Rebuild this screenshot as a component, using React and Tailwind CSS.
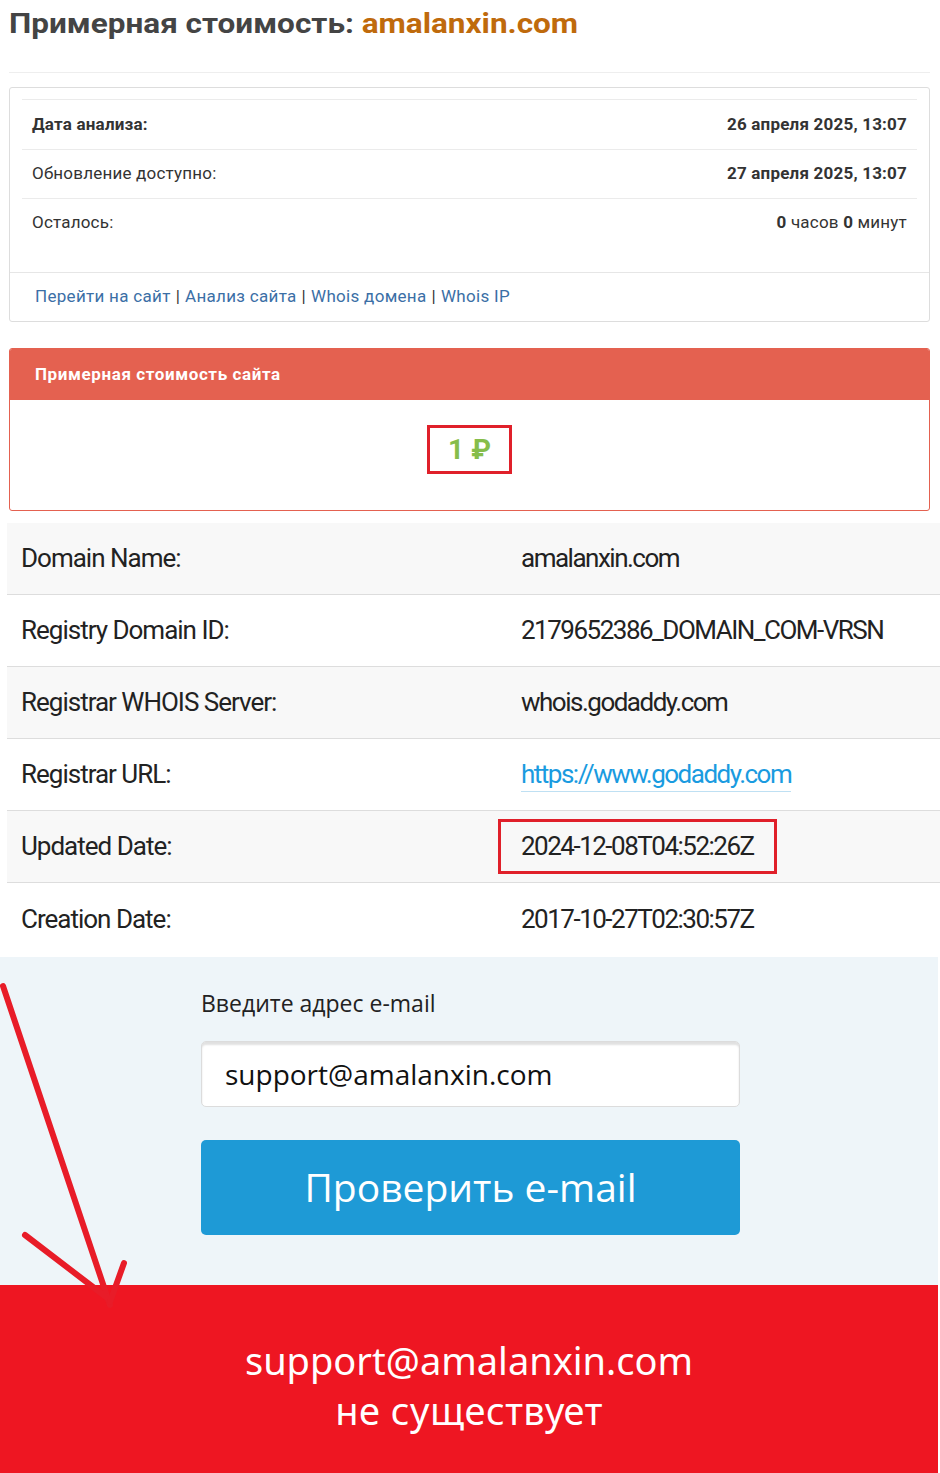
import React from "react";

const rows = [
  { k: "Domain Name:", v: "amalanxin.com", bg: true },
  { k: "Registry Domain ID:", v: "2179652386_DOMAIN_COM-VRSN" },
  { k: "Registrar WHOIS Server:", v: "whois.godaddy.com", bg: true },
  { k: "Registrar URL:", v: "https://www.godaddy.com", link: true },
  { k: "Updated Date:", v: "2024-12-08T04:52:26Z", bg: true, boxed: true },
  { k: "Creation Date:", v: "2017-10-27T02:30:57Z" },
];

export default function App() {
  return (
    <div className="relative w-[940px] bg-white" style={{ fontFamily: "Roboto, 'Liberation Sans', sans-serif" }}>
      {/* top area */}
      <div className="pl-[9px] pr-[10px]">
        <div className="h-[48px] flex items-center">
          <h1 className="text-[28px] font-bold text-[#444] leading-none whitespace-nowrap origin-left scale-x-[1.125]">
            Примерная стоимость: <span className="text-[#bf6a0c]">amalanxin.com</span>
          </h1>
        </div>
        <div className="mt-[24px] border-t border-[#eeeeee]" />

        {/* info card */}
        <div className="mt-[14px] border border-[#dddddd] rounded-[3px]">
          <div className="px-[12px] pt-[11px] pb-[25px] text-[17px] tracking-[0.2px] text-[#333]">
            <div className="h-[50px] border-t border-[#ebebeb] px-[10px] flex items-center justify-between">
              <span className="font-bold">Дата анализа:</span>
              <span className="font-bold">26 апреля 2025, 13:07</span>
            </div>
            <div className="h-[49px] border-t border-[#ebebeb] px-[10px] flex items-center justify-between">
              <span>Обновление доступно:</span>
              <span className="font-bold">27 апреля 2025, 13:07</span>
            </div>
            <div className="h-[49px] border-t border-[#ebebeb] px-[10px] flex items-center justify-between">
              <span>Осталось:</span>
              <span>
                <b>0</b> часов <b>0</b> минут
              </span>
            </div>
          </div>
          <div className="h-[49px] border-t border-[#e6e6e6] px-[25px] flex items-center text-[17px] tracking-[0.3px] text-[#333]">
            <span className="text-[#3b6fa6]">Перейти на сайт</span>
            <span className="mx-[5px]">|</span>
            <span className="text-[#3b6fa6]">Анализ сайта</span>
            <span className="mx-[5px]">|</span>
            <span className="text-[#3b6fa6]">Whois домена</span>
            <span className="mx-[5px]">|</span>
            <span className="text-[#3b6fa6]">Whois IP</span>
          </div>
        </div>

        {/* price panel */}
        <div className="mt-[26px] border border-[#e46150] rounded-[3px] overflow-hidden">
          <div className="h-[51px] bg-[#e46150] px-[25px] flex items-center text-white text-[17px] tracking-[0.6px] font-bold">
            Примерная стоимость сайта
          </div>
          <div className="h-[110px] pt-[25px] flex justify-center">
            <div className="w-[85px] h-[49px] border-[3px] border-[#e0202a] flex items-center justify-center text-[28px] font-bold text-[#86bd4a]">
              1 ₽
            </div>
          </div>
        </div>
      </div>

      {/* whois table */}
      <div className="mt-[12px] ml-[7px] w-[933px]">
        {rows.map((r, i) => (
          <div
            key={i}
            className={`h-[72px] flex items-center text-[26px] text-[#222] ${r.bg ? "bg-[#f8f8f8]" : "bg-white"} ${i < rows.length - 1 ? "border-b border-[#dddddd]" : ""}`}
          >
            <div className="w-[514px] pl-[14px] shrink-0 tracking-[-1px]">{r.k}</div>
            <div className="tracking-[-1.5px]">
              {r.link ? (
                <span className="text-[#1a9be0] border-b border-[#bfe0f3] pb-[2px]">{r.v}</span>
              ) : r.boxed ? (
                <span className="inline-block -ml-[23px] px-[20px] py-[5px] border-[3px] border-[#e0202a]">{r.v}</span>
              ) : (
                r.v
              )}
            </div>
          </div>
        ))}
      </div>

      {/* email check */}
      <div className="mt-[2px] w-[938px] bg-[#eef5f9] pt-[33px] pb-[50px]" style={{ fontFamily: "'Open Sans', sans-serif" }}>
        <div className="ml-[201px] w-[539px]">
          <div className="text-[23px] leading-[26px] font-medium text-[#222]">Введите адрес e-mail</div>
          <div className="mt-[25px] h-[66px] bg-white border border-[#dcdcdc] rounded-[5px] shadow-[inset_0_3px_2px_rgba(0,0,0,0.12)] flex items-center px-[23px] text-[28px] text-[#111]">
            support@amalanxin.com
          </div>
          <div className="mt-[33px] h-[95px] bg-[#1e9ad6] rounded-[5px] flex items-center justify-center text-white text-[39px]">
            Проверить e-mail
          </div>
        </div>
      </div>

      {/* result */}
      <div className="w-[938px] h-[188px] bg-[#ee1622] pt-[50px] text-center text-white text-[38px] leading-[50px]" style={{ fontFamily: "'Noto Sans', sans-serif" }}>
        <div>support@amalanxin.com</div>
        <div className="tracking-[0.5px]">не существует</div>
      </div>

      {/* annotation arrow */}
      <svg className="absolute left-0 top-[970px] pointer-events-none" width="140" height="350" viewBox="0 0 140 350">
        <g stroke="#e81c28" strokeWidth="6" strokeLinecap="round" fill="none">
          <line x1="3" y1="16" x2="110" y2="335" />
          <line x1="25" y1="265" x2="110" y2="330" />
          <line x1="124" y1="293" x2="110" y2="332" />
        </g>
      </svg>
    </div>
  );
}
